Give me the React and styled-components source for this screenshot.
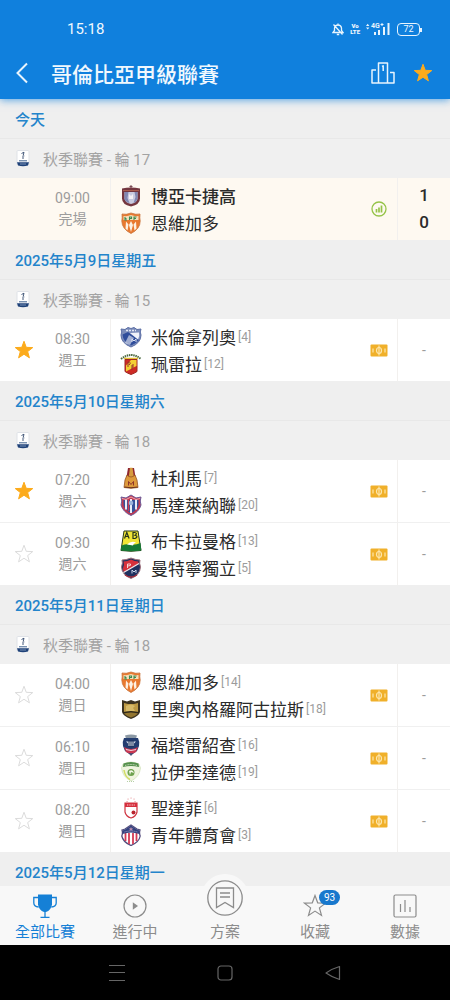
////////////////////
//// Build
import React, { useState } from 'react'
import styled, { createGlobalStyle } from 'styled-components'

////////////////////
//// Data
const groups = [
    {
        date: '今天',
        round: '秋季聯賽 - 輪 17',
        matches: [
            {
                id: 1, time: '09:00', day: '完場', played: true,
                home: { name: '博亞卡捷高', crest: 'chico', score: '1', winner: true },
                away: { name: '恩維加多', crest: 'envigado', score: '0' },
            },
        ],
    },
    {
        date: '2025年5月9日星期五',
        round: '秋季聯賽 - 輪 15',
        matches: [
            {
                id: 2, time: '08:30', day: '週五', starred: true,
                home: { name: '米倫拿列奧', rank: 4, crest: 'millonarios' },
                away: { name: '珮雷拉', rank: 12, crest: 'pereira' },
            },
        ],
    },
    {
        date: '2025年5月10日星期六',
        round: '秋季聯賽 - 輪 18',
        matches: [
            {
                id: 3, time: '07:20', day: '週六', starred: true,
                home: { name: '杜利馬', rank: 7, crest: 'tolima' },
                away: { name: '馬達萊納聯', rank: 20, crest: 'magdalena' },
            },
            {
                id: 4, time: '09:30', day: '週六',
                home: { name: '布卡拉曼格', rank: 13, crest: 'bucaramanga' },
                away: { name: '曼特寧獨立', rank: 5, crest: 'medellin' },
            },
        ],
    },
    {
        date: '2025年5月11日星期日',
        round: '秋季聯賽 - 輪 18',
        matches: [
            {
                id: 5, time: '04:00', day: '週日',
                home: { name: '恩維加多', rank: 14, crest: 'envigado' },
                away: { name: '里奧內格羅阿古拉斯', rank: 18, crest: 'aguilas' },
            },
            {
                id: 6, time: '06:10', day: '週日',
                home: { name: '福塔雷紹查', rank: 16, crest: 'fortaleza' },
                away: { name: '拉伊奎達德', rank: 19, crest: 'equidad' },
            },
            {
                id: 7, time: '08:20', day: '週日',
                home: { name: '聖達菲', rank: 6, crest: 'santafe' },
                away: { name: '青年體育會', rank: 3, crest: 'junior' },
            },
        ],
    },
    { date: '2025年5月12日星期一', matches: [] },
]

////////////////////
//// Crests
const crests = {
    chico: (
        <>
            <path d="M11 0v4M9.500 1.500h3" stroke="#7b4a55" strokeWidth="1" />
            <path d="M2 3.500q9-2 18 0v10q0 6-9 8q-9-2-9-8z" fill="#74363f" />
            <path d="M4.500 7h13v7q-1 4-6.500 5q-5.500-1-6.500-5z" fill="#c9cbe0" />
            <path d="M4.500 7h4l-1 6 2 5q-4-1-5-4zM17.500 7h-3l1 5-2 6q3-1 4-4z" fill="#8187b2" />
            <path d="M9 9l2 2 2-2v5H9z" fill="#f5f1f5" />
            <path d="M3 5.500h16" stroke="#a85b4e" />
        </>
    ),
    envigado: (
        <>
            <path d="M2 2q4 1 9-1q5 2 9 1q-.5 4 .2 7q0 8-9.200 12.500Q2 17 1.800 9Q2.500 6 2 2z" fill="#e9792f" stroke="#c8743c" strokeWidth=".8" />
            <path d="M3.500 4q4 .6 7.500-1q3.500 1.600 7.500 1v4h-15z" fill="#f3dfb9" />
            <path d="M5 5v3h2M5 6.500h1.500M9.500 8V5h2v1.500h-2M14 8v-3h2.500M14 6.500h2" stroke="#3c8a52" strokeWidth="1.100" fill="none" />
            <path d="M6 9.500l2.500 3-1 6-2-2zM11 9l2 4-2 7-2-7zM16 9.500l-2.500 3 1 6 2-2z" fill="#fdf1e4" />
        </>
    ),
    millonarios: (
        <>
            <path d="M1 3l4 .5L8 1.500l3 1 3-1 3 2 4-.5q-1.500 3 0 6q0 8-10 12Q1 17 1 9q1.500-3 0-6z" fill="#7c8dba" stroke="#5b6ea5" />
            <path d="M2.500 8.500L8 6l11 8q-3 4-8 5.500Q3 16 2.500 8.500z" fill="#2f4d9b" />
            <path d="M10 7l9-.5q1 4-1 7z" fill="#f1f3fa" />
            <path d="M5 17l4-8 5 3-4 7z" fill="#fff" opacity=".55" />
            <path d="M6 4.500h10" stroke="#e4e8f4" strokeWidth="1.400" strokeDasharray="2 1" />
            <path d="M12 16v-3l2 2 2-2v3" stroke="#dde3f3" fill="none" />
        </>
    ),
    pereira: (
        <>
            <path d="M1 6q10-8 20 0" stroke="#4b6940" strokeWidth="2" fill="none" strokeDasharray="1.500 .7" />
            <path d="M4 5.500h14" stroke="#e7bf35" strokeWidth="1.500" />
            <path d="M5 6.500h12v12q-2 1.500-6 3q-4-1.500-6-3z" fill="#ce2a25" stroke="#9d2721" />
            <path d="M11 7h5.500v6L6 18.500v-6z" fill="#f3cf34" />
            <path d="M8 9v5M8 9q4 0 1 3M14 12h-2v5M12 14h2" stroke="#95322a" fill="none" />
        </>
    ),
    tolima: (
        <>
            <path d="M8 1h6l1.500 9h-9z" fill="#8f2630" />
            <path d="M10 .8h2.500L14 11H8.500z" fill="#d69b3e" />
            <path d="M7 8q4 4 8 0l2 5 1 7.500q-7 1.500-14 0L5 13z" fill="#dd9a3c" stroke="#945221" strokeWidth=".8" />
            <path d="M8.500 18.500v-4l2.500 3 2.500-3v4" stroke="#8f3428" strokeWidth="1" fill="none" />
            <path d="M4.500 20q6.500 1.500 13 0" stroke="#6d341d" />
        </>
    ),
    magdalena: (
        <>
            <path d="M1 3l5 1 5-3 5 3 5-1q-1.500 4 0 8-2 7-10 10.500Q3 18 1 11q1.500-4 0-8z" fill="#c5374d" stroke="#6c5a97" />
            <path d="M3.500 6h15v5q-1 5-7.500 8.500Q4.500 16 3.500 11z" fill="#36539b" />
            <path d="M6 5.500v10M11 5v14M16 5.500v10" stroke="#e9edf8" strokeWidth="2" />
            <path d="M8.500 6v11" stroke="#cf3b50" strokeWidth="1.500" />
            <circle cx="11" cy="9" r="2.300" fill="#9db5dc" />
            <path d="M2 4.500l4 1 5-2.500 5 2.500 4-1" stroke="#e7acb6" fill="none" />
        </>
    ),
    bucaramanga: (
        <>
            <path d="M4 1h14l3 19.500q-10 1.500-20 0z" fill="#f0e536" stroke="#273818" />
            <path d="M1.500 15.500q5-2 8-1 6 1 11-1.500l.8 7.500q-10 1.500-20.500 0z" fill="#167a35" />
            <path d="M7 14.500q4-4 9-2-3 1-3 3z" fill="#fff" />
            <path d="M4.500 8.500l2.300-6 2.300 6M5.500 6.500h2.700M13 2.500v6h2q4-2 0-3.200q3-2-.2-2.800z" stroke="#26351b" strokeWidth="1.200" fill="none" />
        </>
    ),
    medellin: (
        <>
            <path d="M2 3q4 0 9-2q5 2 9 2q-1 3 .5 7q-.5 8-9.500 11.500Q2 18 1.500 10Q3 6 2 3z" fill="#20315f" stroke="#a0737e" />
            <path d="M3.500 4.500q4 0 7.500-2q3.500 2 7.500 2v2L4 15Q2 12 4 8z" fill="#d6313c" />
            <path d="M3.500 15.500L19 6.500" stroke="#f4e9ea" strokeWidth="1.200" />
            <path d="M7.500 11V7h3q1 2-2.500 2" stroke="#f5d6d6" fill="none" />
            <path d="M12 16.500v-3.500l2 2 2-2v3" stroke="#cbd3e8" fill="none" />
            <path d="M5 18q6 4 12 0" stroke="#a32e3c" strokeWidth="1.500" fill="none" />
        </>
    ),
    aguilas: (
        <>
            <path d="M2 2l5 1.500L11 2l4 1.500L20 2v12q-1 4-9 7-8-3-9-7z" fill="#3c3321" />
            <path d="M4 5l4 1h6l4-1v9H4z" fill="#bd9a45" />
            <path d="M6 8q5-3 9 0l-2 2 2 3H6z" fill="#d8bb69" />
            <path d="M4 15.500q7-2 14 0-3 3-7 4-4-1-7-4z" fill="#927530" />
            <path d="M3 14.500q8-2 16 0" stroke="#2b2618" fill="none" />
        </>
    ),
    fortaleza: (
        <>
            <path d="M5 1.500q6-2 12 0l-1 3H6z" fill="#8b98a4" />
            <path d="M4 4h14q2 4 1 8l-2 5q-3 2-6 4.500Q8 19 5 17l-2-5q-1-4 1-8z" fill="#243d70" />
            <path d="M6 7.500h10l-2 2v2.500H8v-2.500z" fill="#dfe6f0" />
            <path d="M9 6v7M11 6v7M13 6v7" stroke="#1d3159" strokeWidth="1" />
            <path d="M4 13q7 4 14 0l-2 5q-5 3-10 0z" fill="#cb3851" />
            <path d="M6 15.500q5 2 10 0" stroke="#f0d4dc" fill="none" />
            <path d="M9.500 19.500h3L11 22z" fill="#4a587e" />
        </>
    ),
    equidad: (
        <>
            <path d="M3 3q8-4 16 0l1.500 4q-1 9-9.500 13Q2.500 16 1.500 7z" fill="#eff4df" stroke="#cfdfb4" strokeWidth=".7" />
            <path d="M3.500 2.500q7.500-3 15 0l.5 3.500q-8-2-16 0z" fill="#538f4b" />
            <path d="M5 4.500q6-2 12 0" stroke="#d7e5c8" strokeDasharray="1 .6" fill="none" />
            <circle cx="11" cy="11.500" r="3.500" fill="#6da14d" />
            <path d="M9 10q4-2 5 2l-3-1-1 3z" fill="#f5f7e8" />
            <path d="M4 9q1 7 6 9.500" stroke="#d2dc61" strokeWidth="1.500" fill="none" />
            <path d="M7 20.500h8" stroke="#b7cfaa" strokeDasharray="1 1" />
        </>
    ),
    santafe: (
        <>
            <path d="M8 2h.1M11 1h.1M14 2h.1M7 4.500h.1M15 4.500h.1" stroke="#e38a8f" strokeWidth="1.200" strokeLinecap="round" />
            <path d="M5 6h12v9q-1 4.500-6 6-5-1.500-6-6z" fill="#fff" stroke="#cf3440" strokeWidth="1.200" />
            <path d="M5 6h12v4H5z" fill="#d52f3d" />
            <path d="M7 8h8" stroke="#fbd5d6" strokeDasharray="1 .7" />
            <circle cx="13.500" cy="15.500" r="2" fill="#b9232d" />
        </>
    ),
    junior: (
        <>
            <path d="M2 6l3-1 6-4 6 4 3 1q-1 3 .2 6-1 6-9.200 9.500Q3 18 1.800 12 3 9 2 6z" fill="#fff" stroke="#544d7d" strokeWidth="1.300" />
            <path d="M5.500 9v8M9 9v11M13 9v11M16.500 9v8" stroke="#d43b55" strokeWidth="1.800" />
            <path d="M2.500 6.500L5 5.500l6-4 6 4 2.500 1V10q-8.500-3-17 0z" fill="#34427f" />
            <path d="M11 3l.8 1.500h1.500l-1.200 1 .5 1.500L11 6.200 9.400 7l.5-1.500-1.200-1h1.500z" fill="#bd8fae" />
            <path d="M4.500 8q6.500-2 13 0" stroke="#a7a4cc" fill="none" strokeDasharray="1 1" />
        </>
    ),
}

const Crest = ({ name }) => (
    <CrestSvg viewBox="0 0 22 22" fill="none" aria-hidden="true">{crests[name]}</CrestSvg>
)

////////////////////
//// Icons
const starPath = 'M12 1.500l2.700 7.300 7.800.3-6.100 4.800 2.100 7.500-6.500-4.300-6.500 4.300 2.100-7.500L1.500 9.100l7.800-.3z'

const Star = ({ size, filled, color }) => (
    <svg width={size} height={size} viewBox="0 0 24 24" fill={filled ? color : 'none'} stroke={color} strokeWidth="1.200" aria-hidden="true">
        <path d={starPath} />
    </svg>
)

const BellOff = () => (
    <svg width="12" height="13" viewBox="0 0 12 13" fill="none" stroke="#e8f4fd" strokeWidth="1.300" aria-hidden="true">
        <path d="M1 9.500h10L9.500 7.500V5q-.5-3-3.500-3T2.500 5v2.500zM6 2V.5M4.800 11.500h2.400M1.500 1.500l9 10" />
    </svg>
)

const Signal = () => (
    <svg width="25" height="14" viewBox="0 0 25 14" fill="#e8f4fd" aria-hidden="true">
        <path d="M0 4l1.700-2.300L3.400 4zM0 5.500h3.400L1.700 7.500z" />
        <text x="5" y="6" fontSize="7" fontWeight="700" fontFamily="Roboto, sans-serif">4G</text>
        <path d="M14.500 2.500h3M16 1v3" stroke="#e8f4fd" />
        <path d="M8 10h2v3H8zM12 8h2v5h-2zM17 5h2v8h-2zM21.500 1h2v12h-2z" />
    </svg>
)

const Podium = () => (
    <svg width="24" height="22" viewBox="0 0 24 22" fill="none" stroke="#e8f4fd" strokeWidth="1.500" strokeLinejoin="round" aria-hidden="true">
        <path d="M7.500 21V1h9v20M5 8H1v13h22V10.500h-4M11 4.500l1.200-.7V9" />
    </svg>
)

const LeagueBadge = () => (
    <svg width="14" height="17" viewBox="0 0 14 17" aria-hidden="true">
        <rect x="1" y=".5" width="12" height="14" rx="1" fill="#fff" stroke="#dfe2e7" />
        <path d="M5.500 3.500L8 2.200 7.300 5l1 .8M7 5.500v3.500" stroke="#44597a" fill="none" />
        <path d="M3 10.800h8" stroke="#40638f" />
        <path d="M1 12.200h12l-1 3.300q-5 1.300-10 0z" fill="#1f4279" />
        <path d="M4 14h6" stroke="#8fa5c4" strokeWidth=".8" />
    </svg>
)

const LineupIcon = () => (
    <svg width="16" height="16" viewBox="0 0 16 16" fill="none" stroke="#95c348" aria-hidden="true">
        <circle cx="8" cy="8" r="7" strokeWidth="1.300" />
        <path d="M5.500 8v3.500M8 6.500v5M10.500 4.500v7" strokeWidth="1.700" />
    </svg>
)

const PitchIcon = () => (
    <svg width="18" height="13" viewBox="0 0 18 13" fill="none" aria-hidden="true">
        <rect x=".5" y=".5" width="17" height="12" rx="1" fill="#f0b02a" />
        <ellipse cx="9" cy="6.500" rx="2.500" ry="3" stroke="#fde6ac" strokeWidth="1.200" />
        <path d="M9 1.500v10M3 4.500v4M15 4.500v4" stroke="#fde6ac" strokeWidth="1.200" />
    </svg>
)

const Trophy = () => (
    <svg width="24" height="24" viewBox="0 0 24 24" fill="none" stroke="currentColor" strokeWidth="1.300" aria-hidden="true">
        <path d="M5 .5h14v10q-1 6-6 7.500h-2q-5-1.500-6-7.500z" fill="currentColor" stroke="none" />
        <path d="M5 3.500H.8V9q0 3.500 4.800 4M19 3.500h4.200V9q0 3.500-4.800 4M12 17v6M7.500 23.300h9" />
    </svg>
)

const Play = () => (
    <svg width="24" height="24" viewBox="0 0 24 24" fill="none" aria-hidden="true">
        <circle cx="12" cy="12" r="11" stroke="currentColor" strokeWidth="1.200" />
        <path d="M9.800 8.200l5.200 3.800-5.200 3.800z" fill="currentColor" />
    </svg>
)

const Plan = () => (
    <svg width="36" height="36" viewBox="0 0 36 36" fill="none" stroke="currentColor" strokeWidth="1.300" aria-hidden="true">
        <circle cx="18" cy="18" r="17.200" />
        <path d="M9.500 8h17v19.500L18 22.500l-8.500 5zM13 13h10M13 17h10" />
    </svg>
)

const Bars = () => (
    <svg width="24" height="24" viewBox="0 0 24 24" fill="none" stroke="currentColor" strokeWidth="1.200" aria-hidden="true">
        <rect x="1" y="1" width="22" height="22" rx="1.500" />
        <path d="M7.500 10v8M12 6v12M17 13v5" />
    </svg>
)

////////////////////
//// Match
const Match = ({ match, starred, onStar }) => (
    <MatchRow $played={match.played}>
        <StarCell>
            {!match.played && (
                <IconButton type="button" aria-label="收藏" aria-pressed={starred} onClick={onStar}>
                    <Star size={20} filled={starred} color={starred ? '#fcab1c' : '#dcdcdc'} />
                </IconButton>
            )}
        </StarCell>
        <TimeCell>
            <span>{match.time}</span>
            <span>{match.day}</span>
        </TimeCell>
        <Teams>
            {[match.home, match.away].map(team => (
                <Team key={team.name} $winner={team.winner}>
                    <Crest name={team.crest} />
                    <TeamName>{team.name}</TeamName>
                    {team.rank && <Rank>[{team.rank}]</Rank>}
                </Team>
            ))}
        </Teams>
        <MediaCell>{match.played ? <LineupIcon /> : <PitchIcon />}</MediaCell>
        <ScoreCell>
            {match.played ? (
                <>
                    <Score>{match.home.score}</Score>
                    <Score>{match.away.score}</Score>
                </>
            ) : '-'}
        </ScoreCell>
    </MatchRow>
)

export default function App() {
    const [starred, setStarred] = useState({ 2: true, 3: true })
    const [tab, setTab] = useState('all')

    const toggle = id => setStarred(s => ({ ...s, [id]: !s[id] }))

    return (
        <View lang="zh-Hant">
            <GlobalStyle />
            <Header>
                <StatusBar>
                    <Clock>15:18</Clock>
                    <StatusIcons>
                        <BellOff />
                        <Volte><span>Vo</span><span>LTE</span></Volte>
                        <Signal />
                        <Battery>72</Battery>
                    </StatusIcons>
                </StatusBar>
                <TitleBar>
                    <IconButton type="button" aria-label="返回">
                        <svg width="14" height="22" viewBox="0 0 14 22" fill="none" stroke="#e8f4fd" strokeWidth="2" aria-hidden="true">
                            <path d="M12 1.500L2.500 11l9.500 9.500" />
                        </svg>
                    </IconButton>
                    <Title>哥倫比亞甲級聯賽</Title>
                    <IconButton type="button" aria-label="排名"><Podium /></IconButton>
                    <IconButton type="button" aria-label="收藏聯賽"><Star size={20} filled color="#fcab1c" /></IconButton>
                </TitleBar>
            </Header>

            <List>
                {groups.map(group => (
                    <section key={group.date}>
                        <DateRow>{group.date}</DateRow>
                        {group.round && <LeagueRow><LeagueBadge />{group.round}</LeagueRow>}
                        {group.matches.map(match => (
                            <Match key={match.id} match={match} starred={!!starred[match.id]} onStar={() => toggle(match.id)} />
                        ))}
                    </section>
                ))}
            </List>

            <TabBar>
                <Tab type="button" $active={tab === 'all'} onClick={() => setTab('all')}>
                    <TabIcon><Trophy /></TabIcon>全部比賽
                </Tab>
                <Tab type="button" $active={tab === 'live'} onClick={() => setTab('live')}>
                    <TabIcon><Play /></TabIcon>進行中
                </Tab>
                <Tab type="button" $active={tab === 'plan'} onClick={() => setTab('plan')}>
                    <RaisedIcon><Plan /></RaisedIcon>方案
                </Tab>
                <Tab type="button" $active={tab === 'fav'} onClick={() => setTab('fav')}>
                    <TabIcon><Star size={24} color="currentColor" /><Badge>93</Badge></TabIcon>收藏
                </Tab>
                <Tab type="button" $active={tab === 'data'} onClick={() => setTab('data')}>
                    <TabIcon><Bars /></TabIcon>數據
                </Tab>
            </TabBar>

            <SystemBar>
                <SystemButton type="button" aria-label="最近">
                    <svg width="16" height="16" viewBox="0 0 16 16" stroke="currentColor" aria-hidden="true"><path d="M0 .5h16M0 7.500h16M0 15.500h16" /></svg>
                </SystemButton>
                <SystemButton type="button" aria-label="主頁">
                    <svg width="16" height="16" viewBox="0 0 16 16" fill="none" stroke="currentColor" strokeWidth="1.200" aria-hidden="true"><rect x="1" y="1" width="14" height="14" rx="3" /></svg>
                </SystemButton>
                <SystemButton type="button" aria-label="後退">
                    <svg width="16" height="16" viewBox="0 0 16 16" fill="none" stroke="currentColor" strokeWidth="1.200" strokeLinejoin="round" aria-hidden="true"><path d="M14.500 1.500v13q-7-2-13.500-6.500Q7.500 3.500 14.500 1.500z" /></svg>
                </SystemButton>
            </SystemBar>
        </View>
    )
}

////////////////////
//// Styles
const GlobalStyle = createGlobalStyle`
  * {
    box-sizing: border-box;
  }

  body {
    margin: 0;
    font-family: Roboto, "Noto Sans CJK TC", sans-serif;
    background: #efefef;
  }

  svg {
    display: block;
    flex-shrink: 0;
  }
`

const View = styled.div`
  display: flex;
  flex-direction: column;
  height: 100vh;
`

const Header = styled.header`
  position: relative;
  z-index: 1;
  flex-shrink: 0;
  background: #1080dd;
  color: #f0f8fe;
  box-shadow: 0 1px 8px rgba(16, 128, 221, 0.7);
`

const StatusBar = styled.div`
  display: flex;
  align-items: center;
  justify-content: space-between;
  padding: 18px 30px 0 67px;
`

const Clock = styled.span`
  font-size: 15px;
  line-height: 22px;
`

const StatusIcons = styled.div`
  display: flex;
  align-items: center;
  gap: 6px;
`

const Volte = styled.span`
  display: flex;
  flex-direction: column;
  align-items: center;
  font-size: 6px;
  font-weight: 900;
  line-height: 6px;
`

const Battery = styled.span`
  position: relative;
  width: 23px;
  height: 13px;
  border: 1px solid #e8f4fd;
  border-radius: 4px;
  font-size: 9px;
  line-height: 11px;
  text-align: center;

  &::after {
    content: '';
    position: absolute;
    top: 4px;
    right: -3px;
    width: 2px;
    height: 4px;
    background: #e8f4fd;
  }
`

const TitleBar = styled.div`
  display: flex;
  align-items: center;
  height: 59px;
  padding: 12px 17px 5px 15px;
`

const Title = styled.h1`
  flex: 1;
  margin: 0 0 0 22px;
  font-size: 21px;
  font-weight: 500;
`

const IconButton = styled.button`
  padding: 0;
  border: 0;
  background: none;
  cursor: pointer;

  & + & {
    margin-left: 18px;
  }
`

const List = styled.main`
  flex: 1;
  min-height: 0;
  overflow-y: auto;
  scrollbar-width: none;
`

const DateRow = styled.h2`
  height: 40px;
  margin: 0;
  padding: 0 15px;
  border-bottom: 1px solid #e8e8e8;
  background: #efefef;
  color: #2384cb;
  font-size: 15px;
  font-weight: 500;
  line-height: 42px;
`

const LeagueRow = styled.div`
  display: flex;
  align-items: center;
  gap: 13px;
  height: 39px;
  padding: 0 16px;
  background: #f0f0f0;
  color: #a3a3a3;
  font-size: 15px;
`

const MatchRow = styled.article`
  display: flex;
  background: ${props => props.$played ? '#fef9f1' : '#fff'};

  & + & {
    border-top: 1px solid #f0f0f0;
  }
`

const StarCell = styled.div`
  display: flex;
  align-items: center;
  width: 35px;
  padding-left: 14px;
`

const TimeCell = styled.div`
  display: flex;
  flex-direction: column;
  justify-content: center;
  width: 76px;
  border-right: 1px solid #f2f0ee;
  color: #9c9c9c;
  font-size: 14px;
  line-height: 21px;
  text-align: center;
`

const Teams = styled.div`
  flex: 1;
  min-width: 0;
  padding: 4px 0 4px 9px;
`

const Team = styled.div`
  display: flex;
  align-items: center;
  height: 27px;
  color: #2b2b2b;
  font-weight: ${props => props.$winner ? 500 : 400};
`

const CrestSvg = styled.svg`
  width: 22px;
  height: 22px;
`

const TeamName = styled.span`
  margin-left: 9px;
  font-size: 17px;
`

const Rank = styled.span`
  margin-left: 2px;
  color: #9c9c9c;
  font-size: 12px;
`

const MediaCell = styled.div`
  display: flex;
  align-items: center;
  justify-content: center;
  width: 38px;
  border-right: 1px solid #f2f0ee;
`

const ScoreCell = styled.div`
  display: flex;
  flex-direction: column;
  align-items: center;
  justify-content: center;
  width: 52px;
  color: #9c9c9c;
  font-size: 14px;
`

const Score = styled.span`
  color: #2b2b2b;
  font-size: 17px;
  font-weight: 500;
  line-height: 27px;
`

const TabBar = styled.nav`
  position: relative;
  z-index: 1;
  display: flex;
  flex-shrink: 0;
  height: 59px;
  background: #f8f8f8;
`

const Tab = styled.button`
  display: flex;
  flex: 1;
  flex-direction: column;
  align-items: center;
  justify-content: flex-end;
  gap: 2px;
  padding: 0 0 2px;
  border: 0;
  background: none;
  color: ${props => props.$active ? '#1580d6' : '#8c8c8c'};
  font: inherit;
  font-size: 15px;
  line-height: 22px;
  cursor: pointer;
`

const TabIcon = styled.span`
  position: relative;
  display: flex;
  align-items: center;
  justify-content: center;
  width: 24px;
  height: 26px;
`

const RaisedIcon = styled.span`
  margin-bottom: -3px;
  padding: 6px;
  border-radius: 50%;
  background: #f8f8f8;
`

const Badge = styled.span`
  position: absolute;
  top: -3px;
  left: 16px;
  width: 21px;
  border-radius: 8px;
  background: #1878cd;
  color: #fff;
  font-size: 10px;
  line-height: 15px;
  text-align: center;
`

const SystemBar = styled.footer`
  display: flex;
  flex-shrink: 0;
  justify-content: center;
  gap: 52px;
  height: 55px;
  background: #000;
`

const SystemButton = styled.button`
  display: flex;
  align-items: center;
  justify-content: center;
  width: 56px;
  padding: 0;
  border: 0;
  background: none;
  color: #666;
`
